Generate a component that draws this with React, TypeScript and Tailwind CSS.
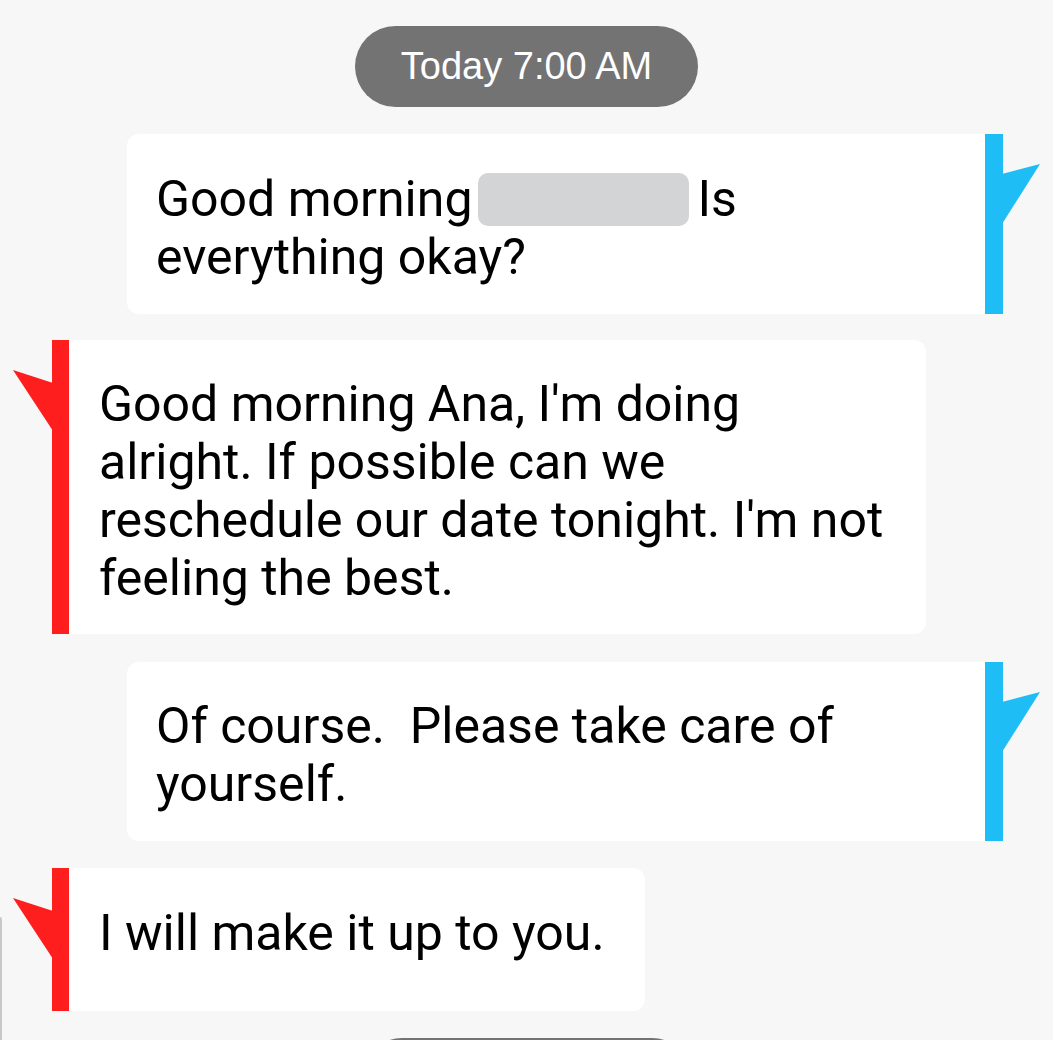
const body = "font-['Roboto','Noto_Sans',sans-serif] text-[50px] leading-[58px] text-black";

function Sent({ children, className }: { children: React.ReactNode; className: string }) {
  return (
    <div className="flex w-[876px] self-end mr-[50px]">
      <div className={`flex-1 rounded-l-[12px] bg-white pl-[29px] ${body} ${className}`}>{children}</div>
      <div className="relative w-[18px] bg-[#1ebdf5]">
        <svg className="absolute left-[17px] top-[30px]" width="38" height="60" viewBox="0 0 38 60">
          <polygon points="0,10 38,0 0,60" fill="#1ebdf5" />
        </svg>
      </div>
    </div>
  );
}

function Received({ children, className }: { children: React.ReactNode; className: string }) {
  return (
    <div className="flex self-start ml-[52px]">
      <div className="relative w-[17px] bg-[#fe1e1e]">
        <svg className="absolute right-[16px] top-[30px]" width="40" height="61" viewBox="0 0 40 61">
          <polygon points="40,13 0,0 40,61" fill="#fe1e1e" />
        </svg>
      </div>
      <div className={`rounded-r-[12px] bg-white pl-[30px] ${body} ${className}`}>{children}</div>
    </div>
  );
}

export default function App() {
  return (
    <div className="relative h-[1040px] w-[1053px] overflow-hidden bg-[#f7f7f7]">
      <div className="flex flex-col pt-[26px]">
        <div className="self-center flex h-[81px] w-[343px] items-center justify-center rounded-full bg-[#737373] font-['Liberation_Sans',Arial,sans-serif] text-[38px] text-white">
          Today 7:00 AM
        </div>

        <div className="mt-[27px] flex flex-col">
          <Sent className="h-[180px] pt-[36px]">
            Good morning
            <span className="ml-[6px] mr-[8px] inline-block h-[53px] w-[211px] rounded-[10px] bg-[#d3d4d6] align-[-10px]" />
            Is
            <br />
            everything okay?
          </Sent>
        </div>

        <div className="mt-[26px] flex flex-col">
          <Received className="h-[294px] w-[857px] pt-[35px]">
            Good morning Ana, I'm doing
            <br />
            alright. If possible can we
            <br />
            reschedule our date tonight. I'm not
            <br />
            feeling the best.
          </Received>
        </div>

        <div className="mt-[28px] flex flex-col">
          <Sent className="h-[179px] pt-[35px]">
            <span className="whitespace-pre">Of course.  Please take care of</span>
            <br />
            yourself.
          </Sent>
        </div>

        <div className="mt-[27px] flex flex-col">
          <Received className="h-[143px] w-[576px] pt-[36px]">I will make it up to you.</Received>
        </div>

        <div className="mt-[27px] self-center h-[80px] w-[330px] rounded-full bg-[#737373]" />
      </div>

      <div className="absolute left-0 top-[917px] h-[140px] w-[2px] rounded-tr-full bg-[#c9c9c9]" />
    </div>
  );
}
